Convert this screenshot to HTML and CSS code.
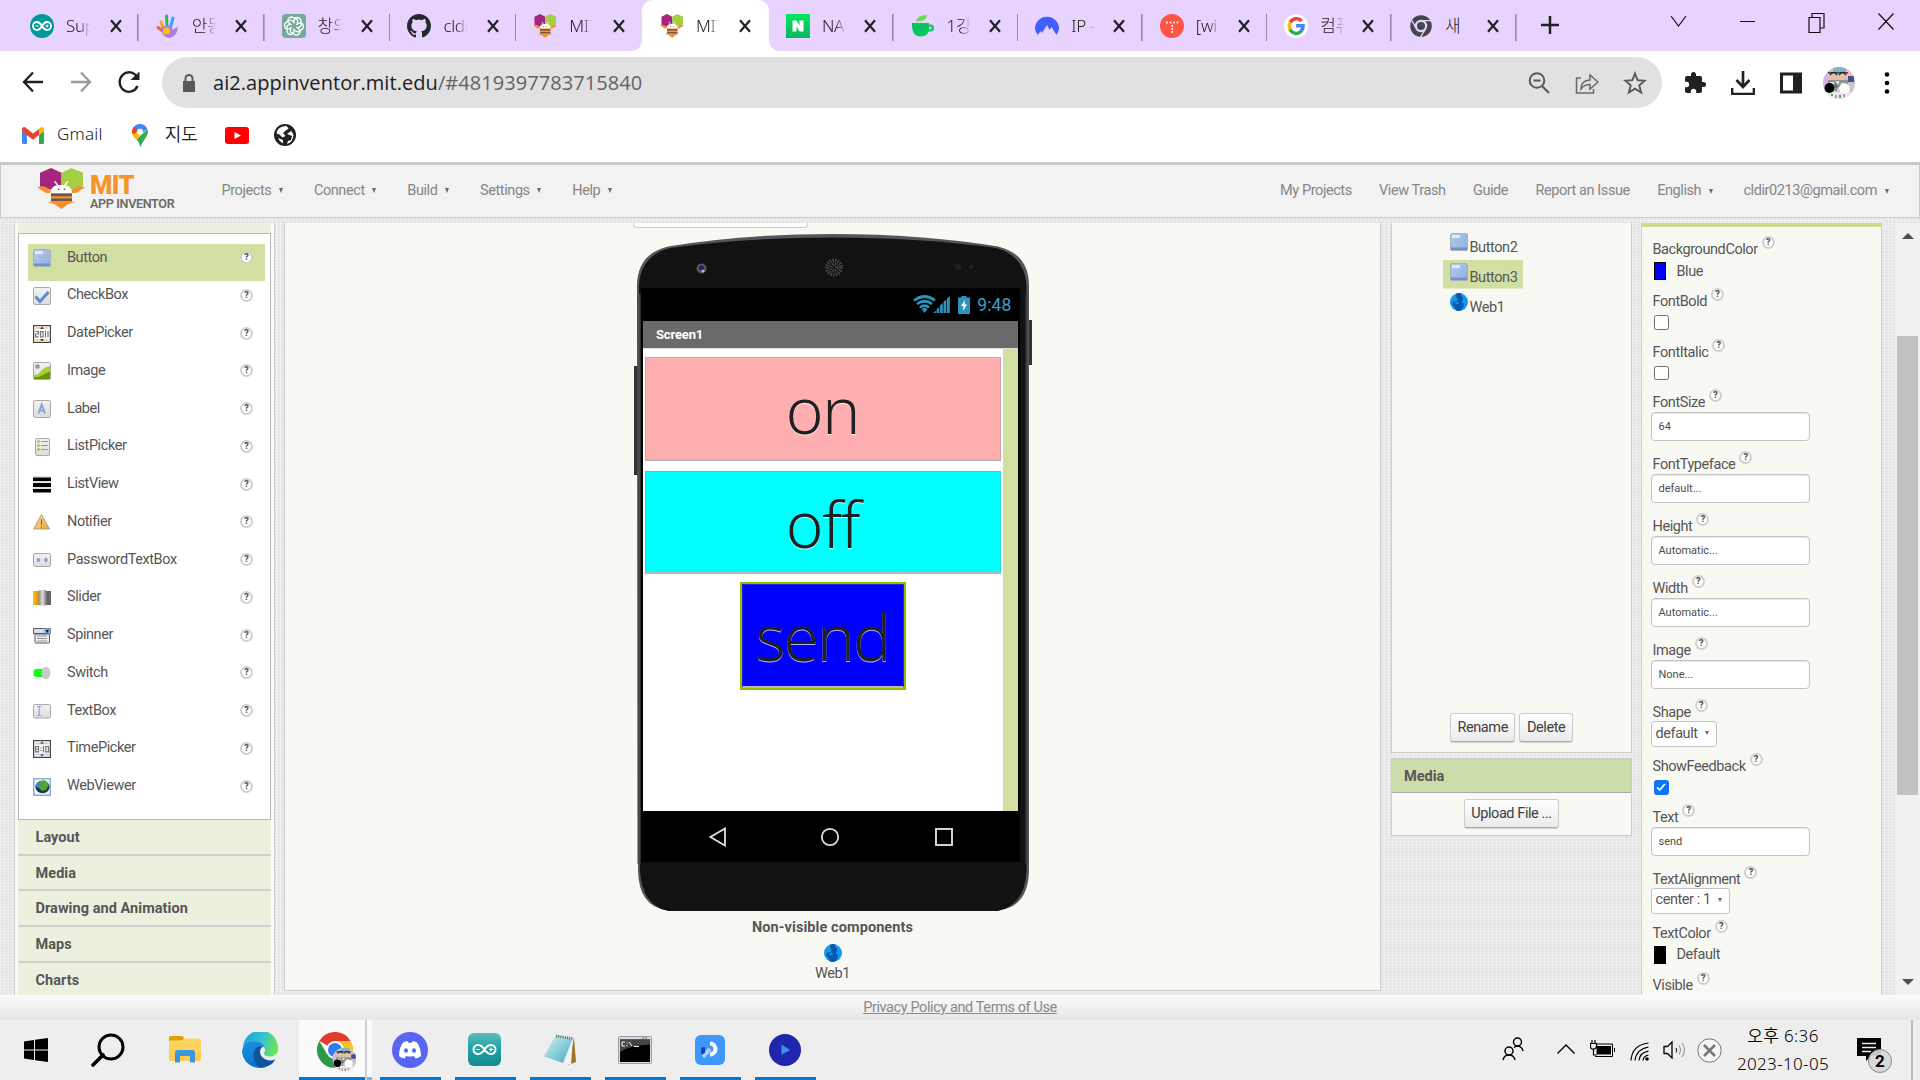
FILE: index.html
```html
<!DOCTYPE html>
<html lang="ko">
<head>
<meta charset="utf-8">
<title>MIT App Inventor</title>
<link rel="stylesheet" href="styles.css">
</head>
<body>
<svg class="defs" aria-hidden="true">
  <defs>
    <linearGradient id="gBtn" x1="0" y1="0" x2="1" y2="1"><stop offset="0" stop-color="#b4c9e8"/><stop offset="1" stop-color="#8fb0df"/></linearGradient>
    <linearGradient id="gBox" x1="0" y1="0" x2="0" y2="1"><stop offset="0" stop-color="#f2f2f2"/><stop offset="1" stop-color="#dcdcdc"/></linearGradient>
    <linearGradient id="gWarn" x1="0" y1="0" x2="1" y2="1"><stop offset="0" stop-color="#fbe3ae"/><stop offset="1" stop-color="#eda63c"/></linearGradient>
    <linearGradient id="gEdge" x1="0" y1="0.2" x2="1" y2="0.4"><stop offset="0" stop-color="#1f9fe0"/><stop offset=".55" stop-color="#35c3cf"/><stop offset="1" stop-color="#69e455"/></linearGradient>
    <linearGradient id="gEdge2" x1="0" y1="0" x2="0.3" y2="1"><stop offset="0" stop-color="#1b93de"/><stop offset="1" stop-color="#0572cf"/></linearGradient>
    <linearGradient id="gTeal" x1="0" y1="0" x2="0" y2="1"><stop offset="0" stop-color="#5cbcbc"/><stop offset=".5" stop-color="#1fa0a3"/><stop offset="1" stop-color="#17898d"/></linearGradient>
    <linearGradient id="gNote" x1="0" y1="0" x2="1" y2="1"><stop offset="0" stop-color="#d3f0f4"/><stop offset=".6" stop-color="#7fc6d4"/><stop offset="1" stop-color="#4ba6bb"/></linearGradient>
    <linearGradient id="gGreen" x1="0" y1="0" x2="0" y2="1"><stop offset="0" stop-color="#03e75f"/><stop offset="1" stop-color="#0bb463"/></linearGradient>
    <linearGradient id="gKnob" x1="0" y1="0" x2="1" y2="0"><stop offset="0" stop-color="#8a8a8a"/><stop offset=".5" stop-color="#dcdcdc"/><stop offset="1" stop-color="#777"/></linearGradient>
    <linearGradient id="gYel" x1="0" y1="0" x2="1" y2="0"><stop offset="0" stop-color="#ffc60a"/><stop offset="1" stop-color="#d58f00"/></linearGradient>
    <linearGradient id="gFold" x1="0" y1="0" x2="0" y2="1"><stop offset="0" stop-color="#ffd968"/><stop offset="1" stop-color="#fdc94c"/></linearGradient>

    <symbol id="close" viewBox="0 0 12 14"><path d="M1 1.200 11 12.800M11 1.200 1 12.800" stroke="#202124" stroke-width="2.200"/></symbol>
    <symbol id="bee" viewBox="0 0 48 51" preserveAspectRatio="none">
      <path d="M3 6 14 0l10.500 6v17L14 27 3 23z" fill="#a5247f"/>
      <path d="M24.500 6 34.500 0 46 6v16l-11 5-10.500-4z" fill="#a3cf45"/>
      <path d="M0 24c6-3 9-1 14 4h20c5-5 8-7 14-4l-9 7H9z" fill="#f7902c"/>
      <path d="M14 29h21v13h4l-8 3-6.500 6-7-6-7.500-3h4z" fill="#f7902c"/>
      <path d="M14 32h21v3H14zM14 38h21v3H14z" fill="#6b5650"/>
      <path d="M13.500 31c0-6 3.500-9 6.500-9.500L17 17l1.200-.8 3.300 4.800h5.500l3.300-4.800 1.200.8-3 4.500c3 .5 6.500 3.500 6.500 9.500z" fill="#fff"/>
      <circle cx="21.500" cy="26.500" r="1" fill="#555"/><circle cx="27.500" cy="26.500" r="1" fill="#555"/>
    </symbol>
    <symbol id="arduino" viewBox="0 0 24 24"><ellipse cx="12" cy="12" rx="12" ry="12" fill="#00979c"/><path d="M12 12C10 8.500 8.800 8 7 8a4 4 0 0 0 0 8c1.800 0 3-.5 5-4s3.200-4 5-4a4 4 0 0 1 0 8c-1.800 0-3-.5-5-4z" fill="none" stroke="#fff" stroke-width="1.800"/><path d="M5.500 12h3M15.500 12h3M17 10.500v3" stroke="#fff" stroke-width="1"/></symbol>
    <symbol id="avatar" viewBox="0 0 32 32">
      <clipPath id="av"><circle cx="16" cy="16" r="16"/></clipPath>
      <g clip-path="url(#av)"><path fill="#c9c5c8" d="M0 0h32v32H0z"/><path fill="#d6b5e4" d="M0 8h5v10H0z"/><path fill="#7fb7c6" d="M10 0h13v5H10z"/><path fill="#f0b9c5" d="M23 3h9v9h-9z"/><path d="M5 5h20v1.500H5z" fill="#444"/><ellipse cx="10.500" cy="9.500" rx="4" ry="3.500" fill="#e3bfa6"/><ellipse cx="19.500" cy="9.500" rx="4" ry="3.500" fill="#e3bfa6"/><path d="M7 8q3.500-5 7 0M16 8q3.500-5 7 0" stroke="#222" stroke-width="1.400" fill="none"/><path d="M25 9h6v6h-6z" fill="#41528d"/><path d="M5 13h20v7H5z" fill="#8d9592"/><path d="M7 15h4v2H7zm6-1h3v3h-3zm5 2h4v2h-4z" fill="#dcdcdc"/><path d="M0 25h32v7H0z" fill="#e9e9e9"/><circle cx="6.500" cy="21" r="5" fill="#000"/><circle cx="21.500" cy="21.500" r="5.300" fill="#fff"/><path d="M13 16v8M11 20h4" stroke="#555"/><path d="M8 27h2v2H8zm8 1h2v3h-2z" fill="#42b574"/><path d="M12 28h2v3h-2zm8-1h2v3h-2z" fill="#ed7fa1"/></g>
    </symbol>
    <symbol id="web" viewBox="0 0 18 18"><circle cx="9" cy="9" r="9" fill="#0e9af0"/><path d="M6.500.4Q9-.2 11.500.5L11 3l2 1v3l-1.500 2L14 11l-1 4-3 2.900-4-.5L4.500 14 2 11l1.500-2.500L7 8l.5-2L6 3.500z" fill="#0858ae"/><path d="M4.500 9.500 8 8.500l1 2-2.500 1z" fill="#1b8ae0"/></symbol>
    <symbol id="p-button" viewBox="0 0 18 18"><rect x=".5" y=".5" width="17" height="17" rx="1.500" fill="url(#gBtn)" stroke="#a9b0ba"/><path d="M1 14.500h16V17H1z" fill="#6f94cc"/><path d="M2 2h8v3H2z" fill="#fff" opacity=".65"/></symbol>
    <symbol id="p-check" viewBox="0 0 18 18"><rect x=".5" y=".5" width="17" height="17" rx="1.500" fill="url(#gBox)" stroke="#a9a9a9"/><path d="M2.500 9.500 7 14.500 15.500 5" fill="none" stroke="#5f8cc8" stroke-width="3"/></symbol>
    <symbol id="p-date" viewBox="0 0 18 18"><rect x=".6" y=".6" width="16.800" height="16.800" fill="#fff" stroke="#444" stroke-width="1.200"/><path d="M2.500 3h13M2.500 15h13" stroke="#f9c58f" stroke-width="1.400"/><path d="M9 1.500 11 4H7zM9 16.500 11 14H7z" fill="#444"/><path d="M2.500 6.500h3V9h-3v2.800h3M7.500 6.500h2.500v5.300H7.500zM12.500 6v6.300M15 6v6.300" stroke="#777" fill="none" stroke-width="1.200"/></symbol>
    <symbol id="p-image" viewBox="0 0 18 18"><rect x=".5" y=".5" width="17" height="17" rx="1" fill="url(#gBox)" stroke="#aaa"/><path d="M1 13c7 0 6-7 16-9v13H1z" fill="#a9d12c"/><path d="M1 15c7 1 9-4 16-5v7H1z" fill="#64970f"/><circle cx="4.500" cy="4.500" r="2.300" fill="#999"/></symbol>
    <symbol id="p-label" viewBox="0 0 18 18"><rect x=".5" y=".5" width="17" height="17" rx="1.500" fill="url(#gBox)" stroke="#aaa"/><path d="M5.500 13.500 8.700 4.500l3.300 9M6.500 10.700h4.700" stroke="#7fa1d6" stroke-width="1.800" fill="none"/></symbol>
    <symbol id="p-list" viewBox="0 0 18 18"><rect x="2.500" y=".5" width="14" height="17" rx="1.500" fill="url(#gBox)" stroke="#aaa"/><path d="M8 3.500h7M8 7.500h7M8 11.500h7" stroke="#999"/><path d="M5.500 2.300v2.400M5.500 6.300v2.400M5.500 10.300v2.400" stroke="#a4c639" stroke-width="2.400"/></symbol>
    <symbol id="p-lview" viewBox="0 0 18 18"><path d="M0 1.500h18V5H0zM0 7h18v4H0zM0 13h18v3.500H0z"/><path d="M0 .9h18M0 5.900h18M0 12h18" stroke="#888" stroke-width=".5"/></symbol>
    <symbol id="p-warn" viewBox="0 0 18 18"><path d="M8.500 1.500 16.500 16H.500z" fill="url(#gWarn)" stroke="#a9916c" stroke-width=".8"/><path d="M8.500 6v6M8.500 13v1.500" stroke="#8b6a3b" stroke-width="1.100"/></symbol>
    <symbol id="p-pass" viewBox="0 0 18 18"><rect x=".5" y="2.500" width="17" height="13" rx="1.500" fill="url(#gBox)" stroke="#aaa"/><circle cx="5.500" cy="9" r="1.900" fill="#7fa1d6"/><circle cx="13" cy="9" r="1.900" fill="#7fa1d6"/></symbol>
    <symbol id="p-slider" viewBox="0 0 18 18"><path d="M0 2h6v14H0z" fill="url(#gYel)"/><path d="M13 2h5v14h-5z" fill="#666"/><rect x="5.500" y="1" width="8" height="15.500" rx="1.500" fill="url(#gKnob)"/></symbol>
    <symbol id="p-spin" viewBox="0 0 18 18"><path d="M.5 1.500h17v5H.5z" fill="#ddd" stroke="#555b6e"/><path d="M11 1.500h6.500v5H11z" fill="#8eb0ea"/><path d="M12.500 3h3.500l-1.700 3z" fill="#111"/><rect x="2" y="7" width="14.500" height="9" rx="1" fill="#eee" stroke="#555b6e"/><path d="M4 9h10M4 11.500h10M4 14h10" stroke="#888" stroke-width=".9"/></symbol>
    <symbol id="p-switch" viewBox="0 0 18 18"><rect x=".5" y="5" width="14" height="8" rx="3" fill="#12ff12"/><ellipse cx="13" cy="9" rx="4.500" ry="6.200" fill="#c9c9c9"/></symbol>
    <symbol id="p-text" viewBox="0 0 18 18"><rect x=".5" y="2.500" width="17" height="13.500" rx="1.500" fill="url(#gBox)" stroke="#aaa"/><path d="M6.200 4.500v9M4 4.500h4.400M4 13.500h4.400" stroke="#8ba8d1" stroke-width="1.200"/></symbol>
    <symbol id="p-time" viewBox="0 0 18 18"><rect x=".6" y=".6" width="16.800" height="16.800" fill="#f4f4f4" stroke="#444" stroke-width="1.200"/><path d="M2.500 3.500h13M2.500 14.500h13" stroke="#b9cfea" stroke-width="1.400"/><path d="M9 1.500 11 3.500H7zM9 16.500 11 14.500H7z" fill="#444"/><path d="M2.500 6.500h3v5.300h-3zM2.500 9h3M8 7.500v1M8 10v1M10.500 6v6.300M12.800 6.500h2.700v5.300h-2.700z" stroke="#777" fill="none" stroke-width="1.200"/></symbol>
    <symbol id="p-webv" viewBox="0 0 18 18"><rect x=".7" y=".7" width="16.600" height="16.600" fill="#e9f1fb" stroke="#88acd8" stroke-width="1.400"/><ellipse cx="9.500" cy="9" rx="7" ry="6.200" fill="#16324d"/><path d="M5 5q4-4 8-2l3 4-3 5-4 1-3-3-1-1z" fill="#57a42c"/><path d="M2.800 8q0-3 4-4l1 3-3 3z" fill="#3e86c9"/></symbol>
  </defs>
</svg>

<div class="tabs">
  <div class="tab"><svg class="fav"><use href="#arduino"/></svg><span class="tt">Supp</span><svg class="x"><use href="#close"/></svg></div>
  <div class="tab"><svg class="fav" viewBox="0 0 24 24"><g fill="none" stroke-width="3" stroke-linecap="round"><path d="M5 8l2.500 7" stroke="#f9a01b"/><path d="M10.500 2l.5 10" stroke="#22b573"/><path d="M17 4l-2.500 9" stroke="#3f9ff5"/><path d="M2 13.500l4 3" stroke="#f0642f"/></g><path d="M6 13q5-3 10 0l1 3q2-3 5-2.500-1 8-7 10-7 1-9-5z" fill="#a97de0"/><circle cx="10.500" cy="17" r="3.500" fill="#ffc107"/></svg><span class="tt">안동</span><svg class="x"><use href="#close"/></svg></div>
  <div class="tab"><svg class="fav" viewBox="0 0 24 24"><rect width="24" height="24" rx="4" fill="#75a99b"/><g fill="none" stroke="#fff" stroke-width="1.300"><path id="pet" d="M12 9.500V6.500q.5-3 3.500-3 3.500.5 3.500 4v4.500L15.500 14"/><use href="#pet" transform="rotate(60 12 12)"/><use href="#pet" transform="rotate(120 12 12)"/><use href="#pet" transform="rotate(180 12 12)"/><use href="#pet" transform="rotate(240 12 12)"/><use href="#pet" transform="rotate(300 12 12)"/></g></svg><span class="tt">창의</span><svg class="x"><use href="#close"/></svg></div>
  <div class="tab"><svg class="fav" viewBox="0 0 16 16"><path fill="#24292f" d="M8 0C3.580 0 0 3.580 0 8c0 3.540 2.290 6.530 5.470 7.590.4.070.550-.170.550-.380 0-.190-.010-.820-.010-1.490-2.010.370-2.530-.490-2.690-.940-.090-.230-.480-.940-.820-1.130-.280-.150-.680-.520-.010-.530.630-.010 1.080.580 1.230.820.720 1.210 1.870.870 2.330.660.070-.520.280-.870.510-1.070-1.780-.200-3.640-.890-3.640-3.950 0-.870.310-1.590.820-2.150-.080-.200-.360-1.020.080-2.120 0 0 .670-.210 2.200.820.640-.180 1.320-.270 2-.270s1.360.090 2 .270c1.530-1.040 2.200-.820 2.200-.820.440 1.100.160 1.920.080 2.120.510.560.820 1.270.820 2.150 0 3.070-1.870 3.750-3.650 3.950.290.250.540.730.540 1.480 0 1.070-.010 1.930-.010 2.200 0 .210.150.460.550.380A8.010 8.010 0 0 0 16 8c0-4.420-3.580-8-8-8z"/></svg><span class="tt">cldi</span><svg class="x"><use href="#close"/></svg></div>
  <div class="tab nosep"><svg class="fav"><use href="#bee"/></svg><span class="tt">MIT</span><svg class="x"><use href="#close"/></svg></div>
  <div class="tab active"><svg class="fav"><use href="#bee"/></svg><span class="tt">MIT</span><svg class="x"><use href="#close"/></svg></div>
  <div class="tab r"><svg class="fav" viewBox="0 0 24 24"><path fill="url(#gGreen)" d="M0 0h24v24H0z"/><path fill="#fff" d="M6.500 6.500h4l3 5v-5h4v11h-4l-3-5v5h-4z"/></svg><span class="tt">NA</span><svg class="x"><use href="#close"/></svg></div>
  <div class="tab r"><svg class="fav" viewBox="0 0 24 24"><path d="M1 9h17v1.500h1.500a3.500 3.500 0 0 1 0 7h-2Q16 22.500 9.500 22.500 1 22 1 12zM18 12.500v3h1.200a1.500 1.500 0 0 0 0-3z" fill="#05c75e" fill-rule="evenodd"/><path d="M5 7.500Q6 1 16 1q0 6.500-11 6.500z" fill="#67dc4f"/></svg><span class="tt">1강</span><svg class="x"><use href="#close"/></svg></div>
  <div class="tab r"><svg class="fav" viewBox="0 0 24 24"><path d="M2.500 21Q0 17 0 14.500a12 11.700 0 0 1 24 0Q24 17 21.500 21l-5-8-2 3L12 11l-5 8-1-2z" fill="#3f5fff"/></svg><span class="tt">IP -</span><svg class="x"><use href="#close"/></svg></div>
  <div class="tab r"><svg class="fav" viewBox="0 0 24 24"><circle cx="12" cy="12" r="12" fill="#ff5544"/><path d="M7 8.500h.01M10.500 8.500h.01M14 8.500h.01M17.500 8.500h.01M12.200 12h.01M12.200 15h.01M12.200 18h.01" stroke="#fff" stroke-width="2" stroke-linecap="round"/></svg><span class="tt">[wi</span><svg class="x"><use href="#close"/></svg></div>
  <div class="tab r"><svg class="fav" viewBox="0 0 24 24"><circle cx="12" cy="12" r="12" fill="#fff"/><g fill="none" stroke-width="3.400"><path d="M17.600 7.200A7 7.400 0 0 0 6.200 8.500" stroke="#ea4335"/><path d="M6.300 8.300a7.500 7.500 0 0 0 0 7.400" stroke="#fbbc05"/><path d="M6.200 15.500A7 7.400 0 0 0 17 17.600" stroke="#34a853"/><path d="M16.600 17.800q2.600-2.300 2.500-6h-7" stroke="#4285f4"/></g></svg><span class="tt">컴퓨</span><svg class="x"><use href="#close"/></svg></div>
  <div class="tab r"><svg class="fav" viewBox="0 0 24 24"><circle cx="12" cy="12" r="8.500" fill="none" stroke="#44474b" stroke-width="4.600"/><circle cx="12" cy="12" r="4" fill="#44474b"/><path d="M12 6.700h11M7.400 14.600 2 5.200M16.600 14.600 11 24" stroke="#e8d3ff" stroke-width="1.300"/></svg><span class="tt full">새</span><svg class="x"><use href="#close"/></svg></div>
  <svg class="plus" viewBox="0 0 18 18"><path d="M9 0v18M0 9h18" stroke="#202124" stroke-width="2.500"/></svg>
  <svg class="winctl" viewBox="0 0 240 24"><g fill="none" stroke="#111" stroke-width="1.200"><path d="M6 7l7.500 10L21 7M75 12.500h15M144 8.500h11v15h-11zM147 8V4.500h12v14.500h-3.500M213.500 4.500l15 16M228.500 4.500l-15 16"/></g></svg>
</div>

<div class="toolbar">
  <svg class="nav" viewBox="0 0 24 24"><path d="M22 12H3M12 2.500 3 12l9 9.500" fill="none" stroke="#202124" stroke-width="2.300"/></svg>
  <svg class="nav" viewBox="0 0 24 24"><path d="M2 12h19M12 2.500 21 12l-9 9.500" fill="none" stroke="#9b9b9b" stroke-width="2.300"/></svg>
  <svg class="nav" viewBox="0 0 24 24"><path d="M20.500 16A9.300 9.800 0 1 1 20 7" fill="none" stroke="#202124" stroke-width="2.400"/><path d="M22.500 1.500V10h-9z" fill="#202124"/></svg>
  <div class="omni">
    <svg class="lock" viewBox="0 0 14 18"><path d="M1 7h12v11H1z" fill="#55595e"/><path d="M3.500 8V4.500a3.500 3.500 0 0 1 7 0V8" fill="none" stroke="#55595e" stroke-width="2"/></svg>
    <span class="url">ai2.appinventor.mit.edu<i>/#4819397783715840</i></span>
    <svg class="oi" viewBox="0 0 24 24"><g fill="none" stroke="#55595e" stroke-width="2"><circle cx="10" cy="9.500" r="7.300"/><path d="M15 15l7 7M6.500 9.500h7"/></g></svg>
    <svg class="oi" viewBox="0 0 24 24"><g fill="none" stroke="#66696d" stroke-width="1.500"><path d="M6 7H1.500v15h17v-4"/><path d="M6 18q0-8.500 9-9V4l8 7-8 7v-4.500q-6 0-9 4.500z"/></g></svg>
    <svg class="oi" viewBox="0 0 24 24"><path d="M12 2.500l2.600 6.700 7.200.5-5.500 4.700 1.800 7.100L12 17.600l-6.100 3.900 1.800-7.100L2.200 9.700l7.200-.5z" fill="none" stroke="#55595e" stroke-width="1.900"/></svg>
  </div>
  <svg class="ti" viewBox="0 0 24 24"><path d="M20.500 11H19V7a2 2 0 0 0-2-2h-4V3.500a2.500 2.500 0 0 0-5 0V5H4a2 2 0 0 0-2 2v3.800h1.500a2.700 2.700 0 0 1 0 5.400H2V20a2 2 0 0 0 2 2h3.800v-1.500a2.700 2.700 0 0 1 5.400 0V22H17a2 2 0 0 0 2-2v-4h1.500a2.500 2.500 0 0 0 0-5z" fill="#202124"/></svg>
  <svg class="ti" viewBox="0 0 24 24"><path d="M12 0v15M5.500 9l6.500 7 6.500-7M1 17v6h22v-6" fill="none" stroke="#202124" stroke-width="2.700"/></svg>
  <svg class="ti" viewBox="0 0 24 24"><path d="M1 1.500h22v21H1zM4 4.500v15h10v-15z" fill="#202124" fill-rule="evenodd"/></svg>
  <svg class="ti av"><use href="#avatar"/></svg>
  <svg class="ti" viewBox="0 0 24 24"><circle cx="12" cy="3.500" r="2.300"/><circle cx="12" cy="12" r="2.300"/><circle cx="12" cy="20.500" r="2.300"/></svg>
</div>

<div class="bookmarks">
  <svg class="bm-g" viewBox="0 0 22 17"><path d="M0 2v13.500A1.500 1.500 0 0 0 1.500 17H5V6z" fill="#4285f4"/><path d="M22 2v13.500a1.500 1.500 0 0 1-1.500 1.500H17V6z" fill="#34a853"/><path d="M0 2.500C0 .5 2-.8 3.800.7L11 6.500 17 2v6l-6 4.700L0 4.500z" fill="#ea4335"/><path d="M17 1.600 18.200.7C20-.8 22 .5 22 2.500V4.500L17 8z" fill="#fbbc04"/></svg>
  <span class="bmt">Gmail</span>
  <svg class="bm-m" viewBox="0 0 16 23"><path d="M15.400 5Q17 9 14 13L8 23Q7.500 18 4.500 15.500z" fill="#34a853"/><path d="M0 8q0 4 4.500 8L10 9 5 7z" fill="#fbbc04"/><path d="M1.800 3Q0 5.500 0 8l2 2 6-5-3-3z" fill="#ea4335"/><path d="M1.800 3Q4 0 8 0q5 0 7.400 5L10 9 6 6.500z" fill="#4285f4"/><path d="M1.800 3 6 6.500 2 10Q0 9 0 8q0-3 1.800-5z" fill="#ea4335"/><circle cx="8" cy="7.800" r="3" fill="#fff"/></svg>
  <span class="bmt">지도</span>
  <svg class="bm-y" viewBox="0 0 24 17"><rect width="24" height="17" rx="3" fill="#f00"/><path d="M9.500 5v7l6.500-3.500z" fill="#fff"/></svg>
  <svg class="bm-w" viewBox="0 0 22 22"><circle cx="11" cy="11" r="11" fill="#202124"/><path d="M9 2.500q-6 1.500-6.500 7l3 1 3 3 3-1.500-2.500-3 3-2.500 2.500-2-2-2.500zM17 7l-4 3 5 2-1 4-3 1-1 3q6-2 6.500-8.500Q19.500 9 17 7zM4 14l5 2v3.500Q5.500 18 4 14z" fill="#fff"/></svg>
</div>

<header class="apphead">
  <svg class="logo" width="48" height="41"><use href="#bee"/></svg>
  <div class="brand"><b>MIT</b><span>APP INVENTOR</span></div>
  <nav class="menu"><a>Projects<i></i></a><a>Connect<i></i></a><a>Build<i></i></a><a>Settings<i></i></a><a>Help<i></i></a></nav>
  <nav class="menu right"><a>My Projects</a><a>View Trash</a><a>Guide</a><a>Report an Issue</a><a>English<i></i></a><a class="mail">cldir0213@gmail.com<i></i></a></nav>
</header>

<main class="work">
  <aside class="palette">
    <div class="strip"></div>
    <ul class="plist">
      <li class="sel"><svg><use href="#p-button"/></svg><span>Button</span><em>?</em></li>
      <li><svg><use href="#p-check"/></svg><span>CheckBox</span><em>?</em></li>
      <li><svg><use href="#p-date"/></svg><span>DatePicker</span><em>?</em></li>
      <li><svg><use href="#p-image"/></svg><span>Image</span><em>?</em></li>
      <li><svg><use href="#p-label"/></svg><span>Label</span><em>?</em></li>
      <li><svg><use href="#p-list"/></svg><span>ListPicker</span><em>?</em></li>
      <li><svg><use href="#p-lview"/></svg><span>ListView</span><em>?</em></li>
      <li><svg><use href="#p-warn"/></svg><span>Notifier</span><em>?</em></li>
      <li><svg><use href="#p-pass"/></svg><span>PasswordTextBox</span><em>?</em></li>
      <li><svg><use href="#p-slider"/></svg><span>Slider</span><em>?</em></li>
      <li><svg><use href="#p-spin"/></svg><span>Spinner</span><em>?</em></li>
      <li><svg><use href="#p-switch"/></svg><span>Switch</span><em>?</em></li>
      <li><svg><use href="#p-text"/></svg><span>TextBox</span><em>?</em></li>
      <li><svg><use href="#p-time"/></svg><span>TimePicker</span><em>?</em></li>
      <li><svg><use href="#p-webv"/></svg><span>WebViewer</span><em>?</em></li>
    </ul>
    <div class="cat">Layout</div><div class="cat">Media</div><div class="cat">Drawing and Animation</div><div class="cat">Maps</div><div class="cat">Charts</div>
  </aside>

  <section class="viewer">
    <div class="sizebox"></div>
    <div class="phone">
      <svg class="bezel" viewBox="0 0 398 677">
        <path d="M0 132h4v109H0zM395 86h3v45h-3z" fill="#333"/>
        <path d="M3 52Q3 20 34 12.500Q110 0 199 0T364 12.500Q395 20 395 52V637Q394 672 366 676H32Q5 672 4 637z" fill="#55565a"/>
        <path d="M5 52Q6 22 36 14Q112 3.500 199 3.500T362 14Q391 22 392.500 52V637Q391 671 364 677H34Q8 671 6 637z" fill="#121212"/>
        <path d="M5 60v570" stroke="#4a4a4a" stroke-width="3"/><path d="M392.500 60v570" stroke="#3a3a3a" stroke-width="2"/>
        <circle cx="67.500" cy="34.500" r="5" fill="#55555c"/><circle cx="67.500" cy="34" r="2.500" fill="#20206e"/><circle cx="69" cy="37" r="1.500" fill="#bbb"/>
        <circle cx="200" cy="33.500" r="7" fill="none" stroke="#4c4c4c" stroke-width="4" stroke-dasharray="1.300 1.300"/><circle cx="200" cy="33.500" r="3" fill="none" stroke="#4c4c4c" stroke-width="3" stroke-dasharray="1.200 1.200"/>
        <circle cx="324" cy="33" r="3.500" fill="#202020"/><circle cx="337" cy="33" r="2.500" fill="#202020"/>
      </svg>
      <div class="screen">
        <div class="status">
          <svg width="38" height="19" viewBox="0 0 38 19"><g fill="none" stroke="#2c93bd" stroke-width="2.700"><path d="M1 5.500q10.500-8 21 0M4 9q7.500-5.500 15 0M7 12.500q4.500-3.500 9 0"/></g><path d="M8.500 14q3-2 6 0l-3 4z" fill="#2c93bd"/><path d="M20 18h2.800v-2.200L20 18zm3.500 0h2.800v-6l-2.800 2.500zm3.500 0h2.800V8L27 10.500zm3.500 0h2.800V4.500L30.500 7zm3.500 0h2.800V1L34 3.500z" fill="#2c93bd"/></svg>
          <svg width="12" height="18" viewBox="0 0 12 18"><path d="M3.500 0h5v1.500H12V18H0V1.500h3.500z" fill="#2c93bd"/><path d="M7 4 3 10h2.500L5 15l4-6.500H6.500z" fill="#fff"/></svg>
          <span>9:48</span>
        </div>
        <div class="title">Screen1</div>
        <div class="canvas">
          <div class="form">
            <div class="abtn on">on</div>
            <div class="abtn off">off</div>
            <div class="abtn send">send</div>
          </div>
          <div class="sb"></div>
        </div>
        <div class="navbar">
          <svg width="18" height="20" viewBox="0 0 18 20"><path d="M16 1.500v17L1.500 10z" fill="none" stroke="#ddd" stroke-width="1.800"/></svg>
          <svg width="20" height="20" viewBox="0 0 20 20"><circle cx="10" cy="10" r="8.200" fill="none" stroke="#ddd" stroke-width="1.800"/></svg>
          <svg width="20" height="20" viewBox="0 0 20 20"><rect x="2" y="2" width="16" height="16" fill="none" stroke="#ddd" stroke-width="1.900"/></svg>
        </div>
      </div>
    </div>
    <div class="nonvis">Non-visible components</div>
    <svg class="webic"><use href="#web"/></svg>
    <div class="webn">Web1</div>
  </section>

  <div class="col">
    <section class="comps">
      <div class="tree">
        <div class="node"><svg><use href="#p-button"/></svg><span>Button2</span></div>
        <div class="node sel"><svg><use href="#p-button"/></svg><span>Button3</span></div>
        <div class="node"><svg><use href="#web"/></svg><span>Web1</span></div>
      </div>
      <div class="btns"><span class="btn">Rename</span><span class="btn">Delete</span></div>
    </section>
    <section class="media">
      <div class="mh">Media</div>
      <div class="mb"><span class="btn">Upload File ...</span></div>
    </section>
  </div>

  <section class="props">
    <div class="p color"><label>BackgroundColor<em>?</em></label><div><i class="sw blue"></i>Blue</div></div>
    <div class="p bool"><label>FontBold<em>?</em></label><div class="cb"></div></div>
    <div class="p bool"><label>FontItalic<em>?</em></label><div class="cb"></div></div>
    <div class="p"><label>FontSize<em>?</em></label><div class="in">64</div></div>
    <div class="p"><label>FontTypeface<em>?</em></label><div class="in">default...</div></div>
    <div class="p"><label>Height<em>?</em></label><div class="in">Automatic...</div></div>
    <div class="p"><label>Width<em>?</em></label><div class="in">Automatic...</div></div>
    <div class="p"><label>Image<em>?</em></label><div class="in">None...</div></div>
    <div class="p pick"><label>Shape<em>?</em></label><div class="dd">default<i></i></div></div>
    <div class="p bool"><label>ShowFeedback<em>?</em></label><div class="cb ck"><svg viewBox="0 0 14 14"><path d="M2.500 7.500 5.500 10.500 11.500 3.500" fill="none" stroke="#fff" stroke-width="2"/></svg></div></div>
    <div class="p"><label>Text<em>?</em></label><div class="in">send</div></div>
    <div class="p pick"><label>TextAlignment<em>?</em></label><div class="dd">center : 1<i></i></div></div>
    <div class="p color"><label>TextColor<em>?</em></label><div><i class="sw"></i>Default</div></div>
    <div class="p"><label>Visible<em>?</em></label></div>
  </section>

  <div class="scroll"><i class="up"></i><div class="thumb"></div><i class="down"></i></div>
</main>

<footer class="foot"><a>Privacy Policy and Terms of Use</a></footer>

<div class="taskbar">
  <div class="ic first"><svg width="24" height="24" viewBox="0 0 24 24"><path d="M0 3.500 10 2v9.500H0zM11 1.800 24 0v11.500H11zM0 12.500h10V22L0 20.500zM11 12.500h13V24l-13-1.800z"/></svg></div>
  <div class="ic find"><svg width="34" height="34" viewBox="0 0 34 34"><g fill="none" stroke="#000" stroke-width="3"><circle cx="20" cy="14" r="12"/><path d="M12 22 2 32" stroke-width="3.600" stroke-linecap="round"/></g></svg></div>
  <div class="ic"><svg width="32" height="28" viewBox="0 0 32 28"><path d="M0 2q0-2 2-2h10q2 0 4 2.500H30q2 0 2 2V23q0 2-2 2H2q-2 0-2-2z" fill="url(#gFold)"/><path d="M0 2q0-2 2-2h10q2 0 3 2-1 2.500-4 2.500H0z" fill="#e0a000"/><path d="M6 26.500V17q0-3 3-3h14q3 0 3 3v9.500h-5V20H11v6.500z" fill="#3b97dd"/></svg></div>
  <div class="ic"><svg width="36" height="36" viewBox="0 0 36 36"><path d="M1 15A17.500 17.500 0 0 1 36 17q0 7-8 7.500-6 0-6-3.500 2-3 0-6-3-4-9-4Q5 11 1 15z" fill="url(#gEdge)"/><path d="M0 19Q1 9.500 12 9.500q8 0 10.500 5.500-7-2-8 5-.5 9 9 15.300Q18 36.500 14 35.500 1 32 0 19z" fill="url(#gEdge2)"/><path d="M12 20q2-7 9-5.500-3 2-3 5 0 7 9 9 3.500.3 6.500-1.500-4 8-14 8.500Q11 33 11.500 23z" fill="#10539f"/></svg></div>
  <div class="ic cur"><svg width="40" height="40" viewBox="0 0 40 40"><path d="M18 18 2.400 9A18 18 0 0 1 33.600 9z" fill="#e33b2e"/><path d="M18 18V9h15.600A18 18 0 0 1 18 36z" fill="#fcc31e"/><path d="M18 36A18 18 0 0 1 2.400 9L10 22h10z" fill="#2c9a48"/><circle cx="18" cy="18" r="9" fill="#fff"/><circle cx="18" cy="18" r="7" fill="#2f7de9"/><svg x="15.500" y="15.500" width="24" height="24"><use href="#avatar"/></svg></svg></div>
  <div class="ic run r1"><svg width="36" height="36" viewBox="0 0 36 36"><circle cx="18" cy="18" r="18" fill="#5865f2"/><path d="M7 24q0-8 4-13.500 2.500-1.200 4.500-1.500l.8 1.700h3.400L20.500 9q2.500.3 4.500 1.500Q29 16 29 24q-2.500 2-5.500 2.500L22 24q-4 1-8 0l-1.500 2.500Q9.500 26 7 24z" fill="#fff"/><ellipse cx="14" cy="18.500" rx="2" ry="2.300" fill="#5865f2"/><ellipse cx="22" cy="18.500" rx="2" ry="2.300" fill="#5865f2"/></svg></div>
  <div class="ic run"><svg width="33" height="33" viewBox="0 0 33 33"><rect width="33" height="33" rx="6" fill="url(#gTeal)"/><path d="M16.500 16.500Q13.500 12 10 12a4.500 4.500 0 0 0 0 9q3.500 0 6.500-4.500T23 12a4.500 4.500 0 0 1 0 9q-3.500 0-6.500-4.500z" fill="none" stroke="#fff" stroke-width="2"/><path d="M8 16.500h4M21 16.500h4M23 14.500v4" stroke="#fff" stroke-width="1.200"/></svg></div>
  <div class="ic run"><svg width="34" height="32" viewBox="0 0 34 32"><path d="M31 4 33 28l-8 3z" fill="#9c7424"/><path d="M12 1 30 4 28 31 0 24z" fill="#eef3f4"/><path d="M12 2.500 29.500 5 20 29 1 22.500z" fill="url(#gNote)"/><path d="M13 2 30 4.500" stroke="#666" stroke-width="2.500" stroke-dasharray="1.200 1"/></svg></div>
  <div class="ic run"><svg width="34" height="28" viewBox="0 0 34 28"><rect x=".5" y=".5" width="33" height="27" rx="1" fill="#d8dbe0" stroke="#999ea6"/><path d="M2 3.500h30V26H2z"/><path d="M2 3.500h30v5Q12 9 2 16z" fill="#444"/><path d="M7 6H4v4h3M9 6.500v1M9 9v1M11 6l3 4M16 10.500h5" stroke="#fff" fill="none"/><path d="M24 2h6" stroke="#567" stroke-dasharray="2 1"/></svg></div>
  <div class="ic run"><svg width="30" height="30" viewBox="0 0 30 30"><rect width="30" height="30" rx="6" fill="#3d97fd"/><path d="M15 8.500a5.500 5.500 0 1 1 0 11" fill="none" stroke="#fff" stroke-width="4"/><path d="M8 22l7-8" stroke="#a9d0ff" stroke-width="4"/><path d="M6.500 12.500 10 12v6l-4 1.500z" fill="#1440ad"/></svg></div>
  <div class="ic run"><svg width="32" height="32" viewBox="0 0 32 32"><circle cx="16" cy="16" r="16" fill="#2026ab"/><path d="M12.500 10.500v10.500L21 16z" fill="#3c8ff5"/></svg></div>

  <div class="tray">
    <svg width="22" height="24" viewBox="0 0 22 24"><g fill="none" stroke="#000" stroke-width="1.500"><circle cx="15.500" cy="5" r="4"/><circle cx="7" cy="14" r="4"/><path d="M1 23q1-5 6-5t6 5M12 10.500q3-2.500 6-.8 2.500 1.300 3 4.300"/></g></svg>
    <svg class="t2" width="18" height="10" viewBox="0 0 18 10"><path d="M.5 9.500 9 1l8.500 8.500" fill="none" stroke="#000" stroke-width="1.400"/></svg>
    <svg class="t3" width="25" height="18" viewBox="0 0 25 18"><path d="M6.500 6h14.500v8.500H6.500z"/><path d="M5 4h17.500v12.500H5M24.500 8v4" fill="none" stroke="#000"/><path d="M.5 3.500h6v3q0 2-3 2.500t-3-2.500zM2 3.500V0M5 3.500V0M3.500 9v6H7" fill="#eee" stroke="#000" stroke-width="1.200"/></svg>
    <svg class="t4" width="20" height="19" viewBox="0 0 20 19"><g fill="none" stroke="#000" stroke-width="1.200"><path d="M1 18.500Q2 3 18.500 1M5 18.500Q6 7.500 18.500 5M9 18.500q1-8 9.500-9.300M13 18.500q.5-4.500 5.500-5.500"/></g><circle cx="17" cy="17" r="1.800"/></svg>
    <svg class="t5" width="24" height="20" viewBox="0 0 24 20"><path d="M1 6.500h3.500L9 2v16l-4.500-4.500H1z" fill="none" stroke="#000" stroke-width="1.300"/><path d="M13 8q1.500 2 0 4.500" stroke="#000" fill="none"/><path d="M16 5.500q3 4.500 0 9M19 3q5 7 0 14" fill="none" stroke="#999" stroke-width="1.200"/></svg>
    <svg class="t6" width="25" height="25" viewBox="0 0 25 25"><circle cx="12.500" cy="12.500" r="11.700" fill="#f4f4f4" stroke="#777"/><path d="M7 7l11 11M18 7 7 18" stroke="#777" stroke-width="2.600"/></svg>
    <div class="clock"><span>오후 6:36</span><span>2023-10-05</span></div>
    <div class="notif"><svg width="24" height="24" viewBox="0 0 24 24"><path d="M0 0h24v18H14l-5 5V18H0z"/><path d="M5 5.500h14M5 9.500h14M5 13.500h9" stroke="#eee" stroke-width="1.300"/></svg><b>2</b></div>
    <i class="edge"></i>
  </div>
</div>
</body>
</html>
```
FILE: styles.css
```css
*{box-sizing:border-box}
body{margin:0;width:1920px;height:1080px;overflow:hidden;display:flex;flex-direction:column;background:#fff;font-family:Roboto,"Liberation Sans",sans-serif;font-size:14.5px;letter-spacing:-.42px;color:#565656}
svg{display:block;flex:none}
i,em{font-style:normal}
.defs{position:absolute;width:0;height:0}

/* browser tabs */
.tabs{height:51px;background:#e8d3ff;display:flex;padding-left:13px;font-family:"Noto Sans","Noto Sans CJK KR",sans-serif;font-weight:300;font-size:17px;letter-spacing:-.3px;color:#202124}
.tab{width:125.8px;height:51px;display:flex;align-items:center;padding-left:17px;flex:none;background:linear-gradient(#9688a6,#9688a6) right 14px/1.6px 27px no-repeat}
.tab.r{width:124.6px}
.tab.nosep{background:none}
.tab.active{width:127px;background:#fff;border-radius:11px 11px 0 0;padding-left:18px;position:relative}
.tab.active::before,.tab.active::after{content:"";position:absolute;bottom:0;width:10px;height:10px}
.tab.active::before{left:-10px;background:radial-gradient(circle at 0 0,transparent 9.5px,#fff 10px)}
.tab.active::after{right:-10px;background:radial-gradient(circle at 100% 0,transparent 9.5px,#fff 10px)}
.fav{width:24px;height:24px}
.tt{width:24px;margin-left:12px;overflow:hidden;white-space:nowrap;line-height:26px;-webkit-mask-image:linear-gradient(90deg,#000 55%,transparent);mask-image:linear-gradient(90deg,#000 55%,transparent)}
.tt.full{-webkit-mask-image:none;mask-image:none}
.x{width:12px;height:14px;margin-left:19.5px}
.r .x{margin-left:18px}
.plus{width:18px;height:18px;margin:16px 0 0 24px}
.winctl{width:240px;height:24px;margin:9px 0 0 106px}

/* toolbar */
.toolbar{height:57px;display:flex;align-items:center;padding:6px 0 0 21px}
.nav{width:24px;height:24px;margin-right:24px;margin-top:-1px}
.omni{width:1500px;height:51px;border-radius:26px;background:#e1e1e1;display:flex;align-items:center;padding:0 15px 0 20px;margin-left:-3px}
.lock{width:14px;height:18px}
.url{flex:1;margin-left:17px;font:400 20px "Open Sans","Noto Sans",sans-serif;letter-spacing:.06px;color:#202124}
.url i{color:#5f6368}
.oi{width:24px;height:24px;margin-left:24px}
.omni .oi:nth-of-type(2){margin-left:0}
.ti{width:24px;height:24px;margin-left:24px}
.omni+.ti{margin-left:21px}
.ti.av{width:32px;height:32px;margin:0 -4px 0 20px}

.bookmarks{height:54px;display:flex;align-items:center;padding-left:22px;font:400 17px "Noto Sans","Noto Sans CJK KR",sans-serif;font-weight:350;letter-spacing:.25px;color:#202124}
.bm-g{width:22px;height:17px}
.bm-m{width:16px;height:23px;margin-left:29px}
.bm-y{width:24px;height:17px;margin-left:25px}
.bm-w{width:22px;height:22px;margin-left:25px}
.bmt{margin-left:13px;line-height:24px;padding-bottom:2px}
.bm-m+.bmt{margin-left:17px;width:35px;font-size:18px;letter-spacing:0;white-space:nowrap}

/* app header */
.apphead{height:56px;flex:none;border:1px solid #ccc;border-top:3px solid #cacaca;background:#f2f2f2;display:flex;align-items:center;padding:0 30px 0 36px;color:#868686}
.logo{margin-bottom:6px}
.brand{display:flex;flex-direction:column;margin-left:5px;width:84px;line-height:1;padding-top:1px}
.brand b{color:#f7922d;font-size:25.5px;font-weight:900;letter-spacing:-.6px;line-height:22px;height:23px}
.brand span{font-size:12.6px;font-weight:600;letter-spacing:-.35px;color:#6a6a6a;white-space:nowrap;line-height:13px}
.menu{display:flex;gap:31.1px;margin-left:47.5px;line-height:20px;margin-bottom:1px}
.menu.right{margin-left:auto;gap:27.3px;margin-bottom:0}
.menu a{display:flex;align-items:center;white-space:nowrap}
.menu.right .mail{margin-left:3px}
.menu a i,.dd i{border:2.8px solid transparent;border-top:5.5px solid #6b6b6b;border-bottom:0;margin-left:7.5px}
.menu.right a i{margin-left:8px}

/* workspace */
.work{height:777px;padding-top:5px;display:flex;align-items:flex-start;overflow:hidden;background-color:#e8e8e8;background-image:repeating-linear-gradient(0deg,rgba(255,255,255,.28) 0 1px,transparent 1px 3px),repeating-linear-gradient(90deg,rgba(255,255,255,.28) 0 1px,rgba(0,0,0,.012) 1px 4px);flex:none}
.palette,.viewer,.comps,.media,.props{background:#f8f9f3;border:1px solid #ccc}
.palette{width:261px;margin-left:14px;height:790px;border-top:0;padding:0 3px;background:#fafafa}
.strip{height:10px;background:#ecf1df}
.plist{list-style:none;margin:0;padding:10px 5px 0 9px;height:587px;border:1px solid #b8b8b8;background:#fff}
.plist li{height:37.77px;display:flex;align-items:flex-start;padding:5px 12px 0 5px}
.plist li.sel{background:#d2dfa3;height:37px;margin-bottom:.77px}
.plist svg{width:18px;height:18px}
.plist span{flex:1;margin:-.5px 0 0 16px;line-height:17px}
em{width:13px;height:13px;border-radius:50%;border:2px solid #d0d0d0;background:#fff;color:#555;font-size:9px;font-weight:900;line-height:9px;text-align:center;letter-spacing:0;flex:none}
.plist em{margin-top:2px}
.cat{height:35.7px;background:#ecf1df;border-bottom:2px solid #d0d0d0;padding-left:17.5px;line-height:36px;font-weight:700;letter-spacing:.05px}

.viewer{width:1097px;height:768px;margin-left:9px;border-top:0;display:flex;flex-direction:column;align-items:center}
.sizebox{width:175px;height:5px;background:#fff;border:1px solid #ccc;border-top:0;border-radius:0 0 4px 4px;align-self:flex-start;margin-left:348px}
.phone{width:398px;height:677px;margin-top:6px;position:relative;padding:54px 0 0 7px}
.bezel{position:absolute;left:0;top:0;width:398px;height:677px}
.screen{position:relative;width:379px;height:574px;background:#000;display:flex;flex-direction:column;padding:0 2px}
.status{height:33px;display:flex;align-items:center;justify-content:flex-end;padding-right:6px;color:#33a0cb;font-size:17.5px;letter-spacing:.1px}
.status svg+svg{margin:0 7px 0 7px}
.title{height:27px;background:#6a6a6a;color:#fff;font-weight:700;font-size:13px;letter-spacing:-.15px;line-height:27px;padding-left:13.5px}
.canvas{height:463px;display:flex;background:#fff;border-top:1px solid #ddd}
.form{width:360px;display:flex;flex-direction:column;align-items:center;padding:8px 2px 0}
.sb{width:15px;background:#d2dfa3}
.abtn{width:356px;height:104px;font:350 64px "Noto Sans","Open Sans",sans-serif;font-variant-ligatures:none;letter-spacing:-1.3px;color:#202020;text-align:center;line-height:103px;text-shadow:0 1px 0 rgba(255,255,255,.7);border:1px solid rgba(128,128,128,.3);border-bottom:2px solid #b8b8b8}
.on{background-color:#ffafaf;margin-bottom:10px}
.off{background-color:#0ff;height:103px;margin-bottom:8px}
.send{background-color:#00f;width:162px;height:104px;outline:2px solid #8fbe00;margin-top:2px;letter-spacing:-2px}
.navbar{height:51px;display:flex;align-items:center;padding-left:66px}
.navbar svg+svg{margin-left:93.5px}
.nonvis{font-weight:700;letter-spacing:.08px;margin-top:7px;line-height:20px}
.webic{width:18px;height:18px;margin-top:6px}
.webn{line-height:20px;margin-top:2px}

.col{width:241px;margin-left:10px}
.comps{height:530px;border-top:0;display:flex;flex-direction:column;justify-content:space-between;padding:7px 0 10px 51px}
.node{height:30px;width:80px;display:flex;align-items:flex-start;padding:3px 0 0 7px}
.node.sel{background:linear-gradient(#d2dfa3,#d2dfa3) 0 -.5px/80px 29px no-repeat}
.node svg{width:18px;height:18px}
.node span{margin:4.5px 0 0 1.5px;line-height:20px}
.btns{display:flex;gap:4px;padding-left:7px}
.btn{display:block;height:29px;border:1px solid #ccc;border-bottom-color:#aaa;border-radius:3px;background:linear-gradient(#fff,#eaeaea);color:#404040;padding:0 6.5px;line-height:27px;box-shadow:0 1px 1px rgba(0,0,0,.15);white-space:nowrap}
.media{margin-top:5px;height:78px}
.mh{height:34px;background:#ccdcaa;border-bottom:1px solid #aaa;border-top:1px solid #ccc;font-weight:700;letter-spacing:0;line-height:33px;padding-left:12px}
.mb{display:flex;justify-content:center;padding-top:6px}

.props{width:241px;margin-left:9px;height:790px;border-top:4px solid #cddc8f;padding:12px 0 0 9px}
.p{height:62px}
.p.color{height:52px}.p.bool{height:50.5px}.p.pick{height:54px}
.p label{display:flex;height:20px;line-height:21px;padding-left:1.5px}
.p em{margin:-3px 0 0 4px}
.p.color div{display:flex;align-items:center;height:18px;margin:3px 0 0 3px}
.sw{width:12px;height:18px;background:#000;border:1px solid #000;margin-right:10.5px}
.sw.blue{background:#00f}
.cb{width:14.5px;height:14.5px;border:1.3px solid #707070;border-radius:2.5px;background:#fff;margin:4px 0 0 3px}
.cb.ck{background:#0a75f5;border-color:#0a75f5}
.cb.ck svg{width:12px;height:12px}
.in{width:158.5px;height:29px;border:1px solid #c4c4c4;border-radius:4px;background:#fff;font-size:11px;letter-spacing:0;line-height:28px;padding-left:6.5px;color:#4c4c4c;box-shadow:inset 0 1px 1px rgba(0,0,0,.1)}
.dd{width:fit-content;height:26px;border:1px solid #c4c4c4;border-radius:3px;background:#fff;display:flex;align-items:center;padding:0 7px 2px 3.5px;margin-top:-1px}
.dd i{border-width:4.5px 2.5px 0}
.scroll{width:25px;height:772px;margin-left:auto;background:#f1f1f1;display:flex;flex-direction:column;align-items:center;padding:10px 0}
.scroll .up{border:6px solid transparent;border-top:0;border-bottom:6px solid #505050}
.scroll .down{border:6px solid transparent;border-bottom:0;border-top:6px solid #505050;margin-top:auto}
.thumb{width:21px;height:459px;background:#c1c1c1;margin-top:97px}

.foot{height:25px;flex:none;background:linear-gradient(#fbfbfb,#e6e6e6);display:flex;justify-content:center;align-items:center;color:#8a8a8a}
.foot a{text-decoration:underline;letter-spacing:-.4px}

/* taskbar */
.taskbar{height:60px;flex:none;background:#eee;display:flex}
.ic{width:75px;display:flex;align-items:center;justify-content:center;flex:none}
.ic.first{width:72px}
.ic.find{padding-right:4px}
.ic.cur{width:73px;justify-content:flex-start;padding:4px 0 0 18px;margin-left:2px;background:linear-gradient(#0078d7,#0078d7) 0 57px/66px 3px no-repeat,linear-gradient(#7db4e4,#7db4e4) 68px 57px/5px 3px no-repeat,linear-gradient(#d0d0d0,#d0d0d0) 66px 0/2px 60px no-repeat,#fafafa}
.ic.run{width:61px;margin-right:14px;border-bottom:3px solid #0078d7;padding:2px 1.5px 0 0}
.ic.r1{margin-left:8px}
.tray{margin-left:auto;width:421px;display:flex;align-items:center;height:60px;flex:none}
.tray>svg{margin-left:3px;margin-top:-3px}
.tray>.t2{margin:-3px 0 0 33px}
.tray>.t3{margin:-2px 0 0 15px}
.tray>.t4{margin:2px 0 0 15px}
.tray>.t5{margin:0 0 0 13px}
.tray>.t6{margin:0 0 0 10px}
.clock{width:110px;margin-left:6px;display:flex;flex-direction:column;font:400 17px/28px "Noto Sans","Noto Sans CJK KR",sans-serif;font-weight:350;color:#000;letter-spacing:.35px;align-items:center}
.notif{position:relative;width:24px;height:24px;margin:0 0 0 19px}
.notif b{position:absolute;left:11px;top:11px;width:24px;height:24px;border:1.3px solid #888;border-radius:50%;background:rgba(215,215,215,.93);color:#000;font-size:17px;line-height:22px;text-align:center;letter-spacing:0}
.edge{width:2px;height:60px;background:#bbb;margin-left:auto;margin-right:7px}
```
